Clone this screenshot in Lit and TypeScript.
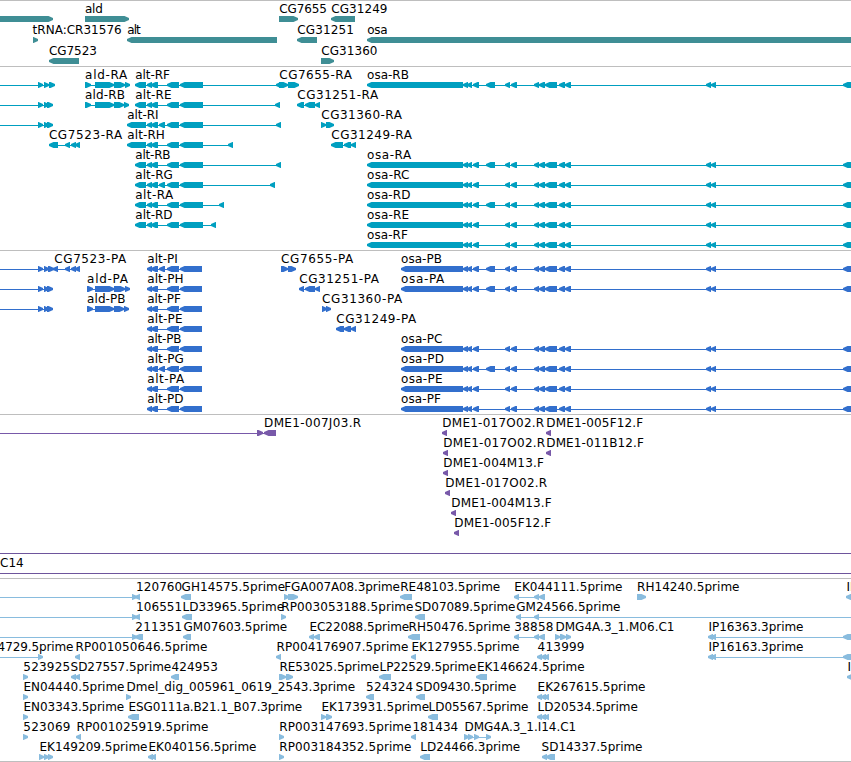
import { LitElement, html, svg, css } from 'lit';
import { customElement, property } from 'lit/decorators.js';
import { styleMap } from 'lit/directives/style-map.js';

// [text, left, right]
type Label = [string, number, number];
// direction, label, blocks as start/end pairs, optional connector
interface Feature {
  dir: 'l' | 'r';
  label?: Label;
  blocks: number[][];
  line?: [number, number];
}
type Row = Feature[];

const WIDTH = 851;
const TIP = 5;

const l = (label: Label | undefined, blocks: number[][], line?: [number, number]): Feature => ({ dir: 'l', label, blocks, line });
const r = (label: Label | undefined, blocks: number[][], line?: [number, number]): Feature => ({ dir: 'r', label, blocks, line });

const genes: Row[] = [
  [
    r(undefined, [[-20, 53]]),
    r(['ald', 85.3, 102.7], [[85, 129]]),
    r(['CG7655', 279.7, 326.7], [[279, 298]]),
    l(['CG31249', 331.7, 387.3], [[331, 355]]),
  ],
  [
    r(['tRNA:CR31576', 33, 121.5], [[33, 38]]),
    l(['alt', 127.7, 140.5], [[127, 277]]),
    l(['CG31251', 297.7, 353.7], [[297, 317]]),
    l(['osa', 367.7, 387.3], [[367, 870]]),
  ],
  [
    l(['CG7523', 49.3, 96.7], [[49, 79]]),
    r(['CG31360', 321.7, 377.3], [[321, 334]]),
  ],
];

const upstream = (end: number) => r(undefined, [[38, 43], [44, 49], [end - 6, end]], [0, end - 3]);

const aldBlocks = (start: number, end: number) => [[start, start + 6], [95, 114], [114, end - 5], [end - 5, end]];

const alt = (label: Label, first: number | null, extra: boolean, bodyEnd: number, tail?: number) => l(
  label,
  [
    ...(first ? [[first, 146]] : []),
    [147, 152],
    [151, 158],
    ...(extra ? [[159, 165]] : []),
    [167, 179],
    [180, bodyEnd],
    ...(tail ? [[tail - 5, tail]] : []),
  ],
);

const osa = (name: string, right: number, start: number, extra: boolean) => l(
  [name, start + 0.5, right],
  [
    [start, 463], [463, 468], [467, 472], [473, 479],
    ...(extra ? [[486, 495]] : []),
    [505, 510], [511, 517], [534, 539], [539, 545], [545, 557],
    [559, 565], [565, 571], [706, 711], [711, 716], [843, 870],
  ],
);

const transcripts: Row[] = [
  [
    upstream(55),
    r(['ald-RA', 85.5, 127], aldBlocks(85, 130)),
    alt(['alt-RF', 135.7, 169.7], 135, false, 203, 281),
    r(['CG7655-RA', 279.7, 351.7], [[279, 288], [288, 299]]),
    osa('osa-RB', 408.7, 367, true),
  ],
  [
    upstream(53),
    r(['ald-RB', 85.5, 124.7], aldBlocks(85, 129)),
    alt(['alt-RE', 135.7, 171.3], 135, false, 203, 280),
    l(['CG31251-RA', 297.7, 378], [[297, 304], [305, 315], [315, 320]]),
  ],
  [
    upstream(53),
    alt(['alt-RI', 127.7, 158.3], 127, true, 203, 281),
    r(['CG31360-RA', 321.7, 401.7], [[321, 326], [326, 334]]),
  ],
  [
    l(['CG7523-RA', 49.3, 122], [[49, 58], [65, 70], [71, 76], [75, 80]]),
    alt(['alt-RH', 127.7, 164.7], 127, false, 203, 233),
    l(['CG31249-RA', 331.7, 411.7], [[331, 343], [344, 351], [351, 356]]),
  ],
  [alt(['alt-RB', 135.7, 170.3], 135, false, 203, 281), osa('osa-RA', 411, 367, true)],
  [alt(['alt-RG', 135.7, 172.7], 135, true, 203, 275), osa('osa-RC', 409.3, 367, false)],
  [alt(['alt-RA', 135.7, 173], 135, false, 203, 224), osa('osa-RD', 410.3, 367, true)],
  [alt(['alt-RD', 135.7, 172.3], 135, false, 203, 216), osa('osa-RE', 409, 367, false)],
  [osa('osa-RF', 407.7, 367, false)],
];

const proteins: Row[] = [
  [
    upstream(54),
    l(['CG7523-PA', 54.7, 126], [[53, 58], [65, 70], [71, 76], [75, 80]]),
    alt(['alt-PI', 147.7, 177.7], null, true, 202),
    r(['CG7655-PA', 281.5, 353], [[281, 288], [288, 296]]),
    osa('osa-PB', 441.7, 401, true),
  ],
  [
    upstream(53),
    r(['ald-PA', 87.5, 127.7], aldBlocks(87, 130)),
    alt(['alt-PH', 147.7, 183.3], null, false, 202),
    l(['CG31251-PA', 299.7, 378.7], [[299, 304], [305, 315], [315, 320]]),
    osa('osa-PA', 444, 401, true),
  ],
  [
    upstream(53),
    r(['ald-PB', 87.5, 125.3], aldBlocks(87, 129)),
    alt(['alt-PF', 147.7, 180.7], null, false, 202),
    r(['CG31360-PA', 322.5, 402], [[322, 327], [326, 331]]),
  ],
  [
    alt(['alt-PE', 147.7, 182.3], null, false, 202),
    l(['CG31249-PA', 336.7, 416], [[336, 344], [344, 351], [351, 356]]),
  ],
  [alt(['alt-PB', 147.7, 181.3], null, false, 202), osa('osa-PC', 442.3, 401, false)],
  [alt(['alt-PG', 147.7, 183.7], null, true, 202), osa('osa-PD', 443.7, 401, true)],
  [alt(['alt-PA', 147.7, 184], null, false, 202), osa('osa-PE', 442.3, 401, false)],
  [alt(['alt-PD', 147.7, 183.3], null, false, 202), osa('osa-PF', 440.7, 401, false)],
];

const bacs: Row[] = [
  [
    r(undefined, [[257, 263]], [0, 264]),
    l(['DME1-007J03.R', 264.5, 361], [[264, 276]]),
    l(['DME1-017O02.R', 442.7, 544], [[442, 447]]),
    l(['DME1-005F12.F', 546.7, 643], [[546, 551]]),
  ],
  [
    l(['DME1-017O02.R', 443.7, 545], [[443, 448]]),
    l(['DME1-011B12.F', 546.7, 643.7], [[546, 551]]),
  ],
  [l(['DME1-004M13.F', 443.7, 543.7], [[443, 448]])],
  [l(['DME1-017O02.R', 445.7, 547], [[445, 450]])],
  [l(['DME1-004M13.F', 451.7, 551.5], [[451, 456]])],
  [l(['DME1-005F12.F', 454.7, 551], [[454, 459]])],
];

const far = [[514, 519], [534, 539], [539, 545]];
const trio = [[537, 542], [541, 546], [544, 549]];
const ipBlocks = [[708, 713], [711, 716], [843, 870]];

const ests: Row[] = [
  [
    r(undefined, [[132, 137]], [0, 137]),
    l(['120760', 136.5, 182], [[135, 140]]),
    l(['GH14575.5prime', 182, 285], [[181, 191]]),
    r(['FGA007A08.3prime', 284.7, 399.7], [[284, 289], [288, 298]]),
    l(['RE48103.5prime', 400.7, 500], [[400, 412]]),
    l(['EK044111.5prime', 514.7, 622.3], far),
    r(['RH14240.5prime', 637.5, 739.3], [[637, 646]]),
    l(['IP16', 847, 872], [[846, 870]]),
  ],
  [
    r(undefined, [[132, 137]], [0, 137]),
    l(['106551', 136.5, 182], [[135, 140]]),
    l(['LD33965.5prime', 182.9, 284], [[182, 192]]),
    r(['RP003053188.5prime', 281.7, 413.3], [[281, 286]]),
    l(['SD07089.5prime', 414.9, 515.3], [[415, 425]]),
    l(['GM24566.5prime', 516.7, 620.3], [[516, 521], [534, 539]], [516, WIDTH]),
  ],
  [
    r(undefined, [[132, 137]], [0, 137]),
    l(['211351', 135.7, 182], [[135, 143]]),
    l(['GM07603.5prime', 184, 287], [[183, 191]]),
    l(['EC22088.5prime', 309.9, 409], [[309, 314], [314, 320]]),
    l(['RH50476.5prime', 409, 510.3], [[408, 420]]),
    l(['38858', 514.7, 553.3], far),
    r(['DMG4A.3_1.M06.C1', 555.9, 674.3], [[555, 560], [560, 566], [566, 571]]),
    l(['IP16363.3prime', 708.9, 803.3], ipBlocks),
  ],
  [
    r(['4729.5prime', -2, 73.3], [[38, 43]], [0, 43]),
    l(['RP001050646.5prime', 75.9, 207.3], [[75, 80]]),
    l(['RP004176907.5prime', 277, 408.3], [[276, 281]]),
    l(['EK127955.5prime', 411.9, 519.3], [[411, 416]]),
    l(['413999', 538, 584.3], trio),
    l(['IP16163.3prime', 708.9, 803.3], ipBlocks),
  ],
  [
    r(['523925', 23.7, 70], [[23, 28]]),
    l(['SD27557.5prime', 71, 171], [[71, 76], [75, 80]]),
    l(['424953', 172, 217.7], [[171, 179]]),
    r(['RE53025.5prime', 279.9, 379], [[279, 286], [286, 293]]),
    l(['LP22529.5prime', 380, 476.3], [[379, 391]]),
    l(['EK146624.5prime', 477.3, 584.5], [[476, 487]]),
    l(['IP0', 848, 868], [[847, 870]]),
  ],
  [
    r(['EN04440.5prime', 23.9, 124.3], [[23, 28]]),
    r(['Dmel_dig_005961_0619_2543.3prime', 126.9, 355], [[126, 131]]),
    l(['524324', 366.5, 413], [[366, 374]]),
    l(['SD09430.5prime', 416, 516.3], [[416, 425]]),
    l(['EK267615.5prime', 538, 645.3], trio),
  ],
  [
    r(['EN03343.5prime', 23.9, 124], [[23, 28]]),
    l(['ESG0111a.B21.1_B07.3prime', 129, 302], [[128, 139]]),
    r(['EK173931.5prime', 321.9, 429], [[321, 326], [326, 332]]),
    l(['LD05567.5prime', 429, 528.3], [[428, 438]]),
    l(['LD20534.5prime', 538, 637.7], trio),
  ],
  [
    r(['523069', 23.7, 70.3], [[23, 28]]),
    l(['RP001025919.5prime', 76.9, 208.3], [[76, 81]]),
    r(['RP003147693.5prime', 279.7, 411.3], [[279, 284]]),
    l(['181434', 412.9, 458], [[411, 416]]),
    r(['DMG4A.3_1.I14.C1', 464.9, 576], [[464, 469], [468, 473], [474, 479], [486, 491]]),
  ],
  [
    r(['EK149209.5prime', 39.9, 147.3], [[39, 44], [44, 49], [48, 53]]),
    l(['EK040156.5prime', 148.9, 256.3], [[148, 153], [151, 156]]),
    r(['RP003184352.5prime', 279.7, 411.3], [[279, 284]]),
    l(['LD24466.3prime', 420.7, 520], [[420, 430]]),
    l(['SD14337.5prime', 542, 642.3], [[542, 547], [546, 555]]),
  ],
];

@customElement('genome-track')
export class GenomeTrack extends LitElement {
  static styles = css`
    :host {
      display: block;
      border-top: 1px solid #bebebe;
    }

    .rows {
      display: flex;
      flex-direction: column;
    }

    .row {
      display: block;
      flex: none;
      overflow: visible;
    }

    .label {
      font-family: 'DejaVu Sans', 'Lucida Sans', sans-serif;
      font-size: 12px;
      fill: #000;
    }
  `;

  @property({ attribute: false }) rows: Row[] = [];
  @property() color = '#000';
  @property({ type: Number }) pitch = 20;

  block(dir: string, start: number, end: number) {
    const tip = Math.min(TIP, end - start);
    const points = dir === 'l'
      ? `${start},17 ${start},19 ${start + tip - 0.5},21 ${end},21 ${end},15 ${start + tip - 0.5},15`
      : `${end},17 ${end},19 ${end - tip + 0.5},21 ${start},21 ${start},15 ${end - tip + 0.5},15`;
    return svg`<polygon points=${points}></polygon>`;
  }

  feature(f: Feature) {
    const from = f.line ? f.line[0] : f.blocks[0][0] + 2;
    const to = f.line ? f.line[1] : f.blocks[f.blocks.length - 1][1] - 2;
    const spliced = f.line || f.blocks.length > 1;

    return svg`
      <g fill=${this.color}>
        ${spliced ? svg`<rect x=${from} y="18" width=${to - from} height="1"></rect>` : ''}
        ${f.blocks.map(([start, end]) => this.block(f.dir, start, end))}
      </g>
      ${f.label ? svg`
        <text class="label" x=${f.label[1] - 0.4} y="12" textLength=${f.label[2] - f.label[1] + 0.6}>${f.label[0]}</text>
      ` : ''}
    `;
  }

  render() {
    return html`
      <div class="rows">
        ${this.rows.map((row) => html`
          <svg class="row" width=${WIDTH} height=${this.pitch}>${row.map((f) => this.feature(f))}</svg>
        `)}
      </div>
    `;
  }
}

@customElement('cytoband-bar')
export class CytobandBar extends LitElement {
  static styles = css`
    :host {
      display: block;
      border-top: 1px solid #6e559c;
      border-bottom: 1px solid #6e559c;
      height: 19px;
      font: 12px/19px 'DejaVu Sans', 'Lucida Sans', sans-serif;
      color: #000;
    }
  `;

  @property() name = '';

  render() {
    return html`${this.name}`;
  }
}

const tracks = [
  { rows: genes, color: '#3f8e95', pitch: 21, gap: 2 },
  { rows: transcripts, color: '#009fc0', pitch: 20, gap: 3 },
  { rows: proteins, color: '#326fcd', pitch: 20, gap: 3 },
  { rows: bacs, color: '#7859a9', pitch: 20, gap: 18 },
];

@customElement('app-root')
export class AppRoot extends LitElement {
  static styles = css`
    :host {
      display: flex;
      flex-direction: column;
      width: 851px;
      height: 762px;
      overflow: hidden;
      background: #fff;
    }

    .band {
      margin-bottom: 4px;
    }

    .last {
      padding-bottom: 2px;
      border-bottom: 1px solid #bebebe;
    }
  `;

  render() {
    return html`
      ${tracks.map((t) => html`
        <genome-track
          .rows=${t.rows}
          .color=${t.color}
          .pitch=${t.pitch}
          style=${styleMap({ marginBottom: `${t.gap}px` })}
        ></genome-track>
      `)}
      <cytoband-bar class="band" name="C14"></cytoband-bar>
      <genome-track class="last" .rows=${ests} .color=${'#89bcde'}></genome-track>
    `;
  }
}
